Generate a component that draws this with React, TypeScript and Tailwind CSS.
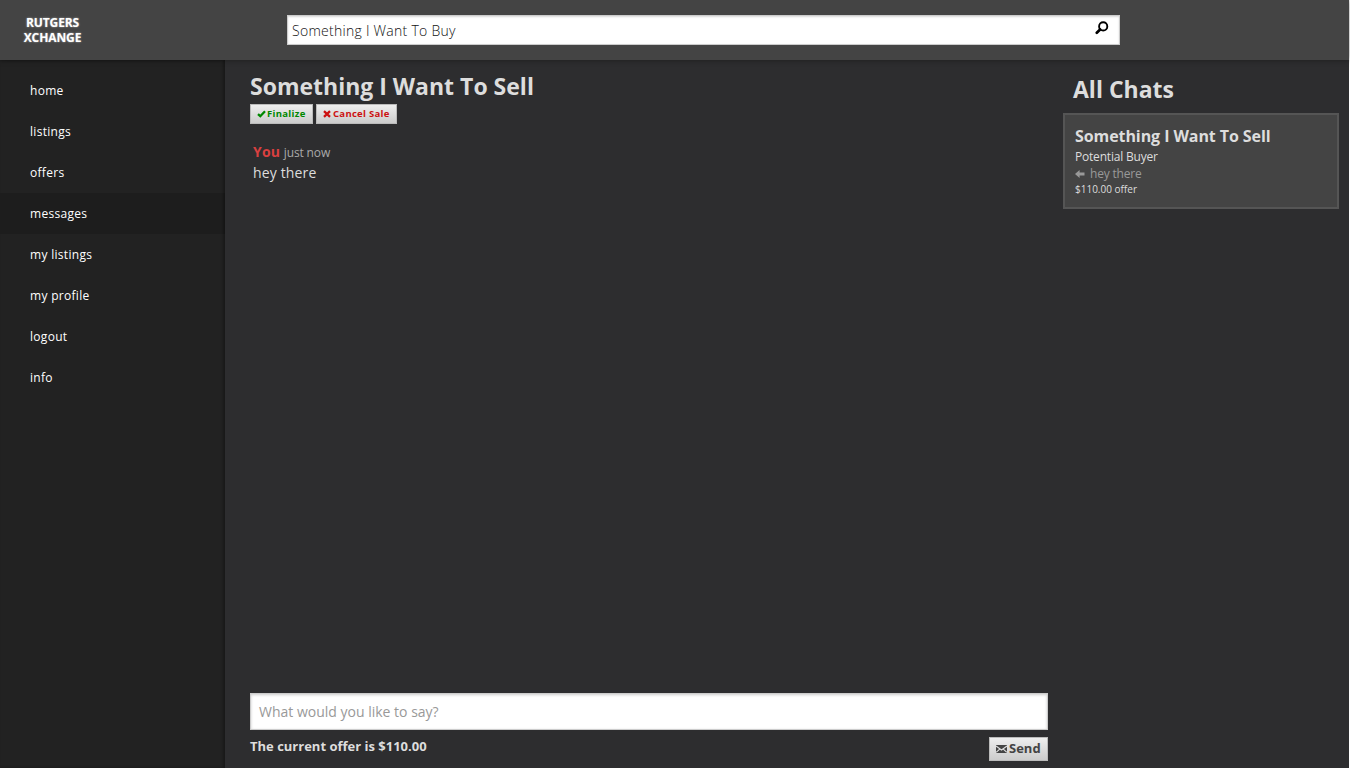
import React from "react";

const navItems = ["home", "listings", "offers", "messages", "my listings", "my profile", "logout", "info"];

function SearchIcon() {
  return (
    <svg width="14" height="14" viewBox="0 0 14 14" fill="none" stroke="#000">
      <circle cx="8.2" cy="5.4" r="4.1" strokeWidth="1.9" />
      <path d="M5.1 8.5 L1.8 11.8" strokeWidth="2.7" strokeLinecap="round" />
    </svg>
  );
}

function CheckIcon() {
  return (
    <svg width="9" height="8" viewBox="0 0 9 8" fill="none" stroke="currentColor">
      <path d="M1 4.2 L3.3 6.2 L8 1.2" strokeWidth="2.3" />
    </svg>
  );
}

function CrossIcon() {
  return (
    <svg width="8" height="8" viewBox="0 0 8 8" fill="none" stroke="currentColor">
      <path d="M1 1.2 L7 6.8 M7 1.2 L1 6.8" strokeWidth="2.3" />
    </svg>
  );
}

function BackIcon() {
  return (
    <svg width="10" height="8" viewBox="0 0 10 8" fill="currentColor">
      <path d="M0 4 L4.6 0 V2.5 H9.5 V5.5 H4.6 V8 Z" />
    </svg>
  );
}

function MailIcon() {
  return (
    <svg width="11" height="8" viewBox="0 0 11 8">
      <path d="M0 0 H11 V8 H0 Z" fill="#444" />
      <path d="M0 1 L5.5 5 L11 1 M.2 7.3 L3.7 4.1 M10.8 7.3 L7.3 4.1" fill="none" stroke="#e0e0e0" strokeWidth="1.1" />
    </svg>
  );
}

const button =
  "flex items-center border border-[#bbb] bg-linear-to-b from-[#eee] to-[#ccc] font-bold whitespace-nowrap";

export default function App() {
  return (
    <div className="h-screen w-full overflow-hidden bg-white pr-px font-['Open_Sans',sans-serif] text-[#ddd]">
      <div className="flex h-full flex-col bg-[#2d2d2f]">
        <header className="relative z-10 flex h-[60px] shrink-0 bg-[#444] shadow-[0_0_6px_rgba(0,0,0,0.4)]">
          <div className="w-[287px] shrink-0 pt-[16px]">
            <div className="w-[105px] text-center text-[12px] leading-[14.5px] font-bold tracking-[-0.1px] text-white [text-shadow:0_0_2px_rgba(255,255,255,0.6)]">
              RUTGERS<br />XCHANGE
            </div>
          </div>
          <div className="mt-[15px] flex h-[30px] w-[833px] items-center justify-between border border-[#ccc] bg-white pr-[10px] pl-[4px] text-[14px] shadow-[inset_0_1px_2px_rgba(0,0,0,0.15)]">
            <span className="font-light tracking-[0.27px] text-[#111]">Something I Want To Buy</span>
            <span className="mb-[5px]"><SearchIcon /></span>
          </div>
        </header>
        <div className="flex min-h-0 flex-1">
          <nav className="w-[225px] shrink-0 bg-[#222] pt-[10px] text-[12px] tracking-[0.3px] text-white shadow-[inset_-2px_0_3px_rgba(0,0,0,0.3)]">
            {navItems.map((item) => (
              <a
                key={item}
                className={
                  item === "messages"
                    ? "flex h-[41px] items-center bg-black/12 pt-px pl-[30px]"
                    : "flex h-[41px] items-center pt-px pl-[30px]"
                }
              >
                {item}
              </a>
            ))}
          </nav>
          <main className="ml-[25px] flex w-[798px] shrink-0 flex-col">
            <h1 className="mt-[10px] text-[23px] leading-[33px] font-bold">Something I Want To Sell</h1>
            <div className="mt-px flex gap-[3px] text-[9.5px] tracking-[0.3px]">
              <button className={`${button} h-[20px] w-[63px] gap-px pl-[6px] text-[#080]`}>
                <CheckIcon />
                <span>Finalize</span>
              </button>
              <button className={`${button} h-[20px] w-[81px] gap-[2px] pl-[6px] text-[#c11]`}>
                <CrossIcon />
                <span>Cancel Sale</span>
              </button>
            </div>
            <div className="mt-[18px] flex-1 pl-[3px] text-[14px] leading-[20px]">
              <div>
                <b className="tracking-[0.2px] text-[#d94040]">You</b>{" "}
                <span className="text-[12px] tracking-[-0.15px] text-[#aaa]">just now</span>
              </div>
              <div className="tracking-[0.15px]">hey there</div>
            </div>
            <div className="flex h-[37px] items-center border border-[#ccc] bg-white pl-[8px] text-[14px] text-[#999] shadow-[inset_0_1px_3px_rgba(0,0,0,0.2)]">
              What would you like to say?
            </div>
            <div className="flex h-[38px] justify-between pt-[7px]">
              <p className="text-[13px] leading-[19px] font-bold">The current offer is $110.00</p>
              <button className={`${button} h-[24px] w-[59px] gap-[2px] pl-[6px] text-[13px] text-[#444]`}>
                <MailIcon />
                <span>Send</span>
              </button>
            </div>
          </main>
          <aside className="ml-[15px] w-[276px] shrink-0">
            <h2 className="mt-[13px] pl-[10px] text-[23px] leading-[33px] font-bold">All Chats</h2>
            <div className="mt-[7px] h-[96px] border-2 border-[#555] bg-[#444] px-[10px] pt-[10px]">
              <h3 className="text-[16px] leading-[22px] font-bold tracking-[-0.08px]">Something I Want To Sell</h3>
              <p className="text-[12px] leading-[19px] tracking-[-0.2px]">Potential Buyer</p>
              <p className="flex items-center gap-[5px] text-[12px] leading-[16px] tracking-[-0.2px] text-[#999]">
                <BackIcon />
                <span>hey there</span>
              </p>
              <p className="text-[10px] leading-[15px]">$110.00 offer</p>
            </div>
          </aside>
        </div>
      </div>
    </div>
  );
}
